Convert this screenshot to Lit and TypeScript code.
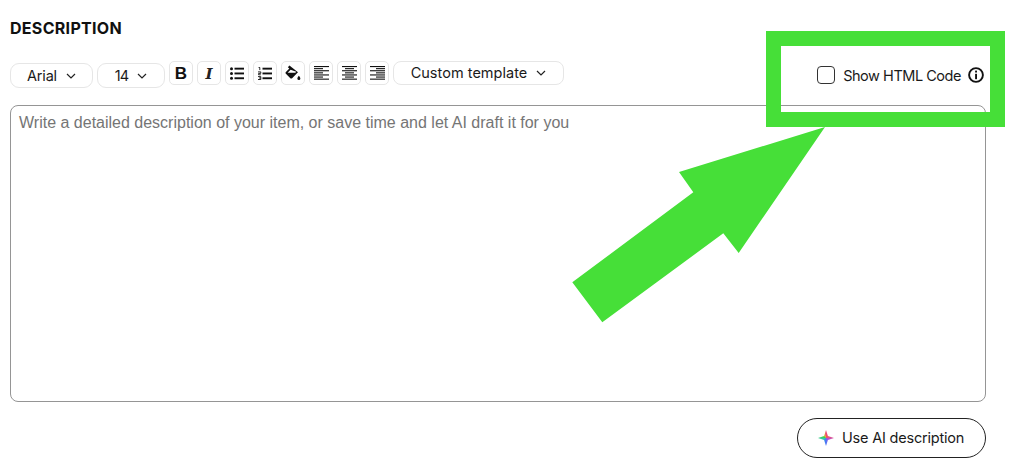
import { LitElement, html, css, svg } from "lit";
import { customElement } from "lit/decorators.js";

const chevron = html`<svg class="chev" width="10" height="6" viewBox="0 0 10 6" fill="none"><path d="M1 1l4 4 4-4" stroke="#222" stroke-width="1.2"/></svg>`;

const lines = (rows: [number, number][]) =>
  rows.map(([x1, x2], i) => svg`<rect x="${x1}" y="${i * 2.1}" width="${x2 - x1}" height="1.1" fill="#111"/>`);

const alignIcon = (rows: [number, number][]) =>
  html`<svg width="15" height="14" viewBox="0 0 15 14">${lines(rows)}</svg>`;

const alignLeft: [number, number][] = [[0,15],[0,9],[0,15],[0,9],[0,15],[0,9],[0,15]];
const alignCenter: [number, number][] = [[0,15],[3,12],[0,15],[3,12],[0,15],[3,12],[0,15]];
const alignRight: [number, number][] = [[0,15],[6,15],[0,15],[6,15],[0,15],[6,15],[0,15]];

@customElement("app-root")
export class AppRoot extends LitElement {
  static styles = css`
    :host {
      display: block;
      position: relative;
      width: 1009px;
      height: 476px;
      box-sizing: border-box;
      padding: 0 23px 0 10px;
      background: #fff;
      font-family: Inter, "Liberation Sans", sans-serif;
      color: #111;
      overflow: hidden;
    }
    h2 {
      margin: 0;
      padding-top: 19px;
      height: 61px;
      box-sizing: border-box;
      font-size: 16px;
      line-height: 19px;
      font-weight: 700;
      letter-spacing: 0.3px;
    }
    .bar {
      display: flex;
      align-items: flex-start;
      height: 44px;
    }
    .tools { display: flex; align-items: flex-start; gap: 4px; }
    .select {
      display: flex;
      align-items: center;
      justify-content: center;
      gap: 9px;
      box-sizing: border-box;
      height: 25px;
      margin-top: 2px;
      border: 1px solid #e6e6e6;
      border-radius: 9px;
      font-size: 14.5px;
      letter-spacing: -0.2px;
      color: #1a1a1a;
      background: #fff;
    }
    .font { width: 83px; }
    .size { width: 68px; letter-spacing: -0.8px; }
    .tool {
      display: flex;
      align-items: center;
      justify-content: center;
      box-sizing: border-box;
      width: 24px;
      height: 24px;
      border: 1px solid #e6e6e6;
      border-radius: 5px;
      background: #fff;
    }
    .b { font: 700 17px "Liberation Sans", sans-serif; color: #111; padding-top: 2px; }
    .i { font: italic 700 15px "DejaVu Serif", serif; color: #222; padding-top: 2px; }
    .template {
      display: flex;
      align-items: center;
      justify-content: center;
      gap: 9px;
      box-sizing: border-box;
      width: 171px;
      height: 24px;
      padding-bottom: 1px;
      border: 1px solid #e6e6e6;
      border-radius: 8px;
      font-size: 14.5px;
      letter-spacing: 0.03px;
      color: #1a1a1a;
    }
    .html {
      display: flex;
      align-items: center;
      margin-left: auto;
      margin-top: 5px;
      margin-right: 2px;
      height: 18px;
      font-size: 14.5px;
      letter-spacing: -0.47px;
      color: #1a1a1a;
    }
    .box {
      box-sizing: border-box;
      width: 18px;
      height: 18px;
      border: 1px solid #333;
      border-radius: 4px;
      margin-right: 8px;
    }
    .info { margin-left: 7px; display: block; }
    .area {
      box-sizing: border-box;
      height: 297px;
      border: 1px solid #959595;
      border-radius: 8px;
      padding: 7px 8px;
      font: 16px/19px "Liberation Sans", Arial, sans-serif;
      color: #757575;
    }
    .foot {
      display: flex;
      justify-content: flex-end;
      margin-top: 16px;
    }
    .ai {
      display: flex;
      align-items: center;
      gap: 8px;
      box-sizing: border-box;
      width: 189px;
      height: 40px;
      padding-left: 20px;
      padding-bottom: 2px;
      border: 1px solid #222;
      border-radius: 20px;
      font-size: 14.5px;
      letter-spacing: -0.2px;
      color: #1a1a1a;
    }
    .spark {
      width: 16px;
      height: 16px;
      margin-top: 2px;
      background: conic-gradient(#f0467e 0deg, #f25c5c 60deg, #b04ae8 120deg, #3f7ef5 190deg, #36c9a8 260deg, #39d24a 290deg, #e8b53c 340deg, #f0467e 360deg);
      clip-path: polygon(50% 0, 62% 38%, 100% 50%, 62% 62%, 50% 100%, 38% 62%, 0 50%, 38% 38%);
    }
    .overlay {
      position: absolute;
      left: 0;
      top: 0;
      pointer-events: none;
    }
  `;

  render() {
    return html`
      <h2>DESCRIPTION</h2>
      <div class="bar">
        <div class="tools">
          <div class="select font">Arial ${chevron}</div>
          <div class="select size">14 ${chevron}</div>
          <div class="tool b">B</div>
          <div class="tool i">I</div>
          <div class="tool">
            <svg width="14" height="13" viewBox="0 0 14 13">
              <circle cx="1.5" cy="1.7" r="1.5" fill="#111"/><circle cx="1.5" cy="6.5" r="1.5" fill="#111"/><circle cx="1.5" cy="11.3" r="1.5" fill="#111"/>
              <rect x="4.5" y="0.7" width="9.5" height="1.9" fill="#111"/><rect x="4.5" y="5.5" width="9.5" height="1.9" fill="#111"/><rect x="4.5" y="10.3" width="9.5" height="1.9" fill="#111"/>
            </svg>
          </div>
          <div class="tool">
            <svg width="14" height="13" viewBox="0 0 14 13">
              <path d="M0.6 0.5h1.2v2.6M0 4.9h2.8v1.5H0.6v1.4h2.2M0 9.6h2.8v2.9H0M1 11h1.8" fill="none" stroke="#111" stroke-width="0.9"/>
              <rect x="4.5" y="0.7" width="9.5" height="1.9" fill="#111"/><rect x="4.5" y="5.5" width="9.5" height="1.9" fill="#111"/><rect x="4.5" y="10.3" width="9.5" height="1.9" fill="#111"/>
            </svg>
          </div>
          <div class="tool">
            <svg width="16" height="16" viewBox="0 0 18 18">
              <path d="M5 0.6L3.2 2.4l1.7 1.5L1 7.8c-.6.6-.6 1.4 0 2l5 5c.6.6 1.4.6 2 0l6.6-6.6z" fill="#111"/>
              <path d="M6.3 5.3L3 8.6h8.6l1-1z" fill="#fff"/>
              <path d="M15.6 12c1 1.4 1.7 2.2 1.7 3.1a1.7 1.7 0 0 1-3.4 0c0-.9.7-1.7 1.7-3.1z" fill="#111"/>
            </svg>
          </div>
          <div class="tool">${alignIcon(alignLeft)}</div>
          <div class="tool">${alignIcon(alignCenter)}</div>
          <div class="tool">${alignIcon(alignRight)}</div>
          <div class="template">Custom template ${chevron}</div>
        </div>
        <div class="html">
          <div class="box"></div>
          <span>Show HTML Code</span>
          <svg class="info" width="16" height="16" viewBox="0 0 16 16">
            <circle cx="8" cy="8" r="6.9" fill="none" stroke="#111" stroke-width="1.9"/>
            <rect x="7.1" y="3.6" width="1.9" height="1.9" fill="#111"/>
            <rect x="7.1" y="6.8" width="1.9" height="5.4" fill="#111"/>
          </svg>
        </div>
      </div>
      <div class="area">Write a detailed description of your item, or save time and let AI draft it for you</div>
      <div class="foot">
        <div class="ai"><div class="spark"></div><span>Use AI description</span></div>
      </div>
      <svg class="overlay" width="1009" height="476" viewBox="0 0 1009 476">
        <path fill-rule="evenodd" fill="#46df38" d="M766 31H1005V127H766ZM781 46V112H990V46Z"/>
        <polygon fill="#46df38" points="825,127 679,172 693.3,192.3 572.3,282.3 602.3,322.3 723.3,233.3 738.7,253"/>
      </svg>
    `;
  }
}
